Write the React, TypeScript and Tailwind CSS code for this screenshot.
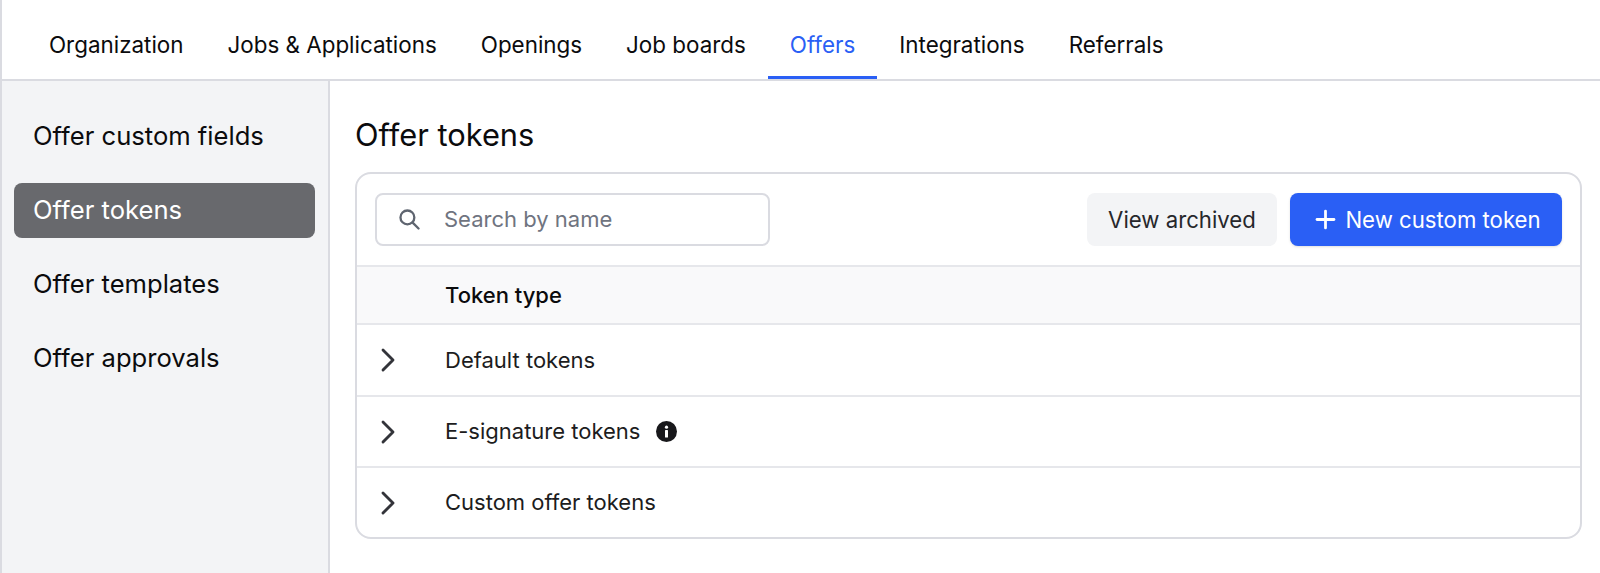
import { ChevronRight, Plus } from "lucide-react";

const tabs = ["Organization", "Jobs & Applications", "Openings", "Job boards", "Offers", "Integrations", "Referrals"];
const side = ["Offer custom fields", "Offer tokens", "Offer templates", "Offer approvals"];
const rows = ["Default tokens", "E-signature tokens", "Custom offer tokens"];

function Info() {
  return (
    <svg width="21" height="21" viewBox="0 0 21 21" className="ml-[16px] shrink-0">
      <circle cx="10.5" cy="10.5" r="10.5" fill="#18181b" />
      <circle cx="10.5" cy="6.2" r="1.6" fill="#fff" />
      <rect x="9" y="9" width="3" height="7.5" rx="0.6" fill="#fff" />
    </svg>
  );
}

function SearchGlyph() {
  return (
    <svg width="21" height="21" viewBox="0 0 20 20" fill="none" stroke="#5f6570" strokeWidth="2.2" strokeLinecap="round" className="shrink-0">
      <circle cx="8" cy="8" r="6.6" />
      <path d="M13 13l5.6 5.6" />
    </svg>
  );
}

export default function App() {
  return (
    <div className="flex h-[573px] w-[1600px] flex-col overflow-hidden border-l-2 border-[#dadbe1] bg-white font-['Inter',sans-serif] text-[#0b0b0d]">
      <nav className="flex h-[81px] shrink-0 items-start border-b-2 border-[#dadbe1] pl-[25px]">
        {tabs.map((t) => (
          <div
            key={t}
            className={
              t === "Offers"
                ? "flex h-[79px] items-center border-b-[3px] border-[#2a5ff5] px-[22px] pt-[13px] text-[22.4px] text-[#2a5ff5]"
                : "flex h-[79px] items-center border-b-[3px] border-transparent px-[22px] pt-[13px] text-[22.4px]"
            }
          >
            {t}
          </div>
        ))}
      </nav>
      <div className="flex min-h-0 flex-1">
        <aside className="flex w-[328px] shrink-0 flex-col gap-[19px] border-r-2 border-[#dadbe1] bg-[#f3f4f6] pl-[12px] pr-[13px] pt-[28px]">
          {side.map((s) => (
            <div
              key={s}
              className={
                s === "Offer tokens"
                  ? "flex h-[55px] items-center rounded-lg bg-[#68696d] pl-[19px] text-[25.6px] text-white"
                  : "flex h-[55px] items-center rounded-lg pl-[19px] text-[25.6px]"
              }
            >
              {s}
            </div>
          ))}
        </aside>
        <main className="min-w-0 flex-1 pl-[25px] pr-[18px]">
          <h1 className="mt-[31px] h-[45px] text-[30.8px] leading-[45px] font-normal">Offer tokens</h1>
          <section className="mt-[15px] overflow-hidden rounded-2xl border-2 border-[#dadbe1]">
            <div className="flex h-[91px] items-center justify-between pl-[18px] pr-[18px]">
              <div className="flex h-[53px] w-[395px] items-center rounded-lg border-2 border-[#dadbe1] pl-[22px]">
                <SearchGlyph />
                <span className="ml-[24px] text-[22px] text-[#6f7480]">Search by name</span>
              </div>
              <div className="flex gap-[13px]">
                <button className="flex h-[53px] w-[190px] items-center justify-center rounded-lg bg-[#f3f4f6] text-[22.2px] text-[#26272b]">
                  View archived
                </button>
                <button className="flex h-[53px] w-[272px] items-center justify-center gap-[5px] rounded-lg bg-[#2a5ff5] text-[22.2px] text-white shadow-sm">
                  <Plus size={29} strokeWidth={2.3} />
                  New custom token
                </button>
              </div>
            </div>
            <div className="flex h-[60px] items-center border-y-2 border-[#e6e7eb] bg-[#f9f9fa] pl-[88px] text-[22px] font-medium">
              Token type
            </div>
            {rows.map((r, i) => (
              <div
                key={r}
                className={
                  i === 0
                    ? "flex h-[72px] items-center border-b-2 border-[#e6e7eb] pl-[11px] text-[22px] text-[#1c1c20]"
                    : i === 1
                      ? "flex h-[71px] items-center border-b-2 border-[#e6e7eb] pl-[11px] text-[22px] text-[#1c1c20]"
                      : "flex h-[69px] items-center pl-[11px] text-[22px] text-[#1c1c20]"
                }
              >
                <ChevronRight size={40} strokeWidth={1.7} className="mr-[37px] text-[#33343a]" />
                {r}
                {i === 1 && <Info />}
              </div>
            ))}
          </section>
        </main>
      </div>
    </div>
  );
}
